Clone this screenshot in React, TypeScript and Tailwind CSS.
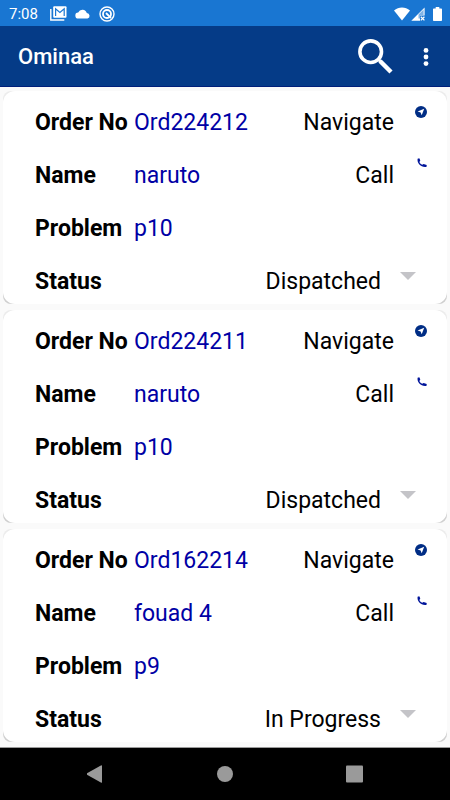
import { useState } from "react";

interface Order {
  orderNo: string;
  name: string;
  problem: string;
  status: string;
}

const ORDERS: Order[] = [
  { orderNo: "Ord224212", name: "naruto", problem: "p10", status: "Dispatched" },
  { orderNo: "Ord224211", name: "naruto", problem: "p10", status: "Dispatched" },
  { orderNo: "Ord162214", name: "fouad 4", problem: "p9", status: "In Progress" },
];

const STATUSES = ["Dispatched", "In Progress"];

function StatusBar() {
  return (
    <div className="flex h-[26px] shrink-0 items-center bg-[#1976d2] pl-[9px] pr-2 pt-px text-white">
      <span className="w-[41px] text-[15px] leading-6">7:08</span>
      <div className="flex items-center gap-2">
        {/* Mail */}
        <svg viewBox="0 0 17 15" className="h-[15px] w-[17px]" fill="none">
          <path d="M.8 3v11h13.5" stroke="currentColor" strokeWidth="1.4" />
          <rect x="3.2" y=".3" width="13.3" height="11.4" rx="1" fill="currentColor" />
          <path d="M5.6 10V2.8l4.3 3.6 4.3-3.6V10" stroke="#1976d2" strokeWidth="1.2" />
        </svg>
        {/* Cloud */}
        <svg viewBox="0 0 16 10" className="h-[10px] w-4" fill="currentColor">
          <path d="M3.5 9.5a3 3 0 0 1-.3-6A4.6 4.6 0 0 1 11.8 4 2.8 2.8 0 0 1 12.5 9.5z" />
        </svg>
        {/* Q badge */}
        <svg viewBox="0 0 16 16" className="h-4 w-4" fill="none" stroke="currentColor">
          <circle cx="8" cy="8" r="7" strokeWidth="1.4" />
          <circle cx="8" cy="8" r="4" strokeWidth="1.8" />
          <path d="M7 7l5 5" strokeWidth="1.8" />
        </svg>
      </div>
      <div className="ml-auto flex items-center">
        {/* Wifi */}
        <svg viewBox="0 0 16 14" className="h-[14px] w-4" fill="currentColor">
          <path d="M0 3.5C4.6-.6 11.4-.6 16 3.5L8 13.5z" />
        </svg>
        {/* Signal without data */}
        <svg viewBox="0 0 14 14" className="ml-px h-[14px] w-[14px]">
          <path d="M.3 13.7L13.6.4v8H9v5.3z" fill="currentColor" />
          <path d="M7.5 7.5l5.1-5v5.6H9v3.5H7.5z" fill="#1976d2" opacity=".55" />
          <path d="M9.8 9.8l3.6 3.6m0-3.6l-3.6 3.6" stroke="currentColor" strokeWidth="1.3" />
        </svg>
        {/* Battery */}
        <svg viewBox="0 0 9 14" className="ml-2 h-[14px] w-[9px]" fill="currentColor">
          <path d="M2.7 0h3.6v1.4H8.2a.8.8 0 0 1 .8.8v11a.8.8 0 0 1-.8.8H.8a.8.8 0 0 1-.8-.8v-11a.8.8 0 0 1 .8-.8h1.9z" />
        </svg>
      </div>
    </div>
  );
}

function AppBar() {
  return (
    <header className="flex h-[61px] shrink-0 items-center border-b border-[#001f7a] bg-[#053b87] pl-[18px] pr-5 pt-[2px] text-white">
      <h1 className="text-[22px] font-medium leading-7">Ominaa</h1>
      <button aria-label="Search" className="ml-auto">
        <svg viewBox="0 0 36 36" className="h-9 w-9" fill="none" stroke="currentColor">
          <circle cx="12.7" cy="12.7" r="10.8" strokeWidth="3.6" />
          <path d="M20.5 20.5l2 2" strokeWidth="3" />
          <path d="M22 22l11 11" strokeWidth="4.4" />
        </svg>
      </button>
      <button aria-label="More options" className="ml-7">
        <svg viewBox="0 0 8 20" className="h-5 w-2" fill="currentColor">
          <circle cx="4" cy="3.4" r="2.4" />
          <circle cx="4" cy="10" r="2.4" />
          <circle cx="4" cy="16.6" r="2.4" />
        </svg>
      </button>
    </header>
  );
}

function OrderCard({ order }: { order: Order }) {
  const [status, setStatus] = useState(order.status);
  const selectId = `status-${order.orderNo}`;

  return (
    // the darker backing shows only at the rounded corners
    <li className="rounded-lg bg-gradient-to-b from-[#ececec] to-[#cfcfcf]">
      <div className="flex rounded-xl bg-white pl-8 pr-5">
        <div className="flex flex-1 flex-col gap-6 pb-2 pt-[17px] text-[23px] leading-[29px] text-black">
          <div className="flex pr-[6px]">
            <span className="w-[99px] shrink-0 whitespace-nowrap font-bold">Order No</span>
            <span className="text-[#0000a5]">{order.orderNo}</span>
            <button className="ml-auto">Navigate</button>
          </div>
          <div className="flex pr-[6px]">
            <span className="w-[99px] shrink-0 font-bold">Name</span>
            <span className="text-[#0000a5]">{order.name}</span>
            <button className="ml-auto">Call</button>
          </div>
          <div className="flex">
            <span className="w-[99px] shrink-0 font-bold">Problem</span>
            <span className="text-[#0000a5]">{order.problem}</span>
          </div>
          <div className="flex pr-[19px]">
            <label htmlFor={selectId} className="font-bold">Status</label>
            <select
              id={selectId}
              value={status}
              onChange={e => setStatus(e.target.value)}
              className="ml-auto h-[29px] appearance-none bg-transparent text-right leading-[29px]"
            >
              {STATUSES.map(s => (
                <option key={s}>{s}</option>
              ))}
            </select>
          </div>
        </div>

        {/* Icons for navigate, call and the status menu */}
        <div className="flex w-[27px] shrink-0 flex-col pb-6 pt-[15px] text-[#002d85]">
          <svg viewBox="0 0 12 12" className="h-3 w-3 self-end">
            <circle cx="6" cy="6" r="6" fill="currentColor" />
            <path d="M9.2 2.8L6.7 9.3 5.6 6.5 2.6 5.6z" fill="#fff" />
          </svg>
          <svg viewBox="0 0 12 12" className="mt-[39px] h-3 w-3 self-end text-[#00149a]" fill="currentColor">
            <path d="M2.6 1.7L4.3 1.2 5.3 3.6 4.4 4.9C5 6.2 5.9 7.1 7.2 7.7L8.6 6.9 11.7 7.9 11.6 9.8C6.6 10.9 1.8 6.6 2.6 1.7z" />
          </svg>
          <svg viewBox="0 0 16 8" className="mt-auto h-2 w-4 text-[#c4c4c8]" fill="currentColor">
            <path d="M0 0h16L8 8z" />
          </svg>
        </div>
      </div>
    </li>
  );
}

function NavBar() {
  return (
    <nav className="flex h-[53px] shrink-0 items-center justify-center gap-[111px] border-t border-[#9a9a9a] bg-black text-[#9a9a9a]">
      <button aria-label="Back">
        <svg viewBox="0 0 18 18" className="h-[18px] w-[18px]" fill="currentColor">
          <path d="M14.3.3a.5.5 0 0 1 .7.4v16.6a.5.5 0 0 1-.7.4L-.7 9.4a.5.5 0 0 1 0-.8z" />
        </svg>
      </button>
      <button aria-label="Home">
        <svg viewBox="0 0 18 18" className="h-[18px] w-[18px]" fill="currentColor">
          <circle cx="9" cy="9" r="8" />
        </svg>
      </button>
      <button aria-label="Recent apps">
        <svg viewBox="0 0 18 18" className="h-[18px] w-[18px]" fill="currentColor">
          <rect x="1" y=".5" width="17" height="17" rx="1" />
        </svg>
      </button>
    </nav>
  );
}

export default function App() {
  return (
    <div className="flex min-h-screen flex-col bg-[#fafafa] font-[Roboto,sans-serif]">
      <StatusBar />
      <AppBar />
      <main className="flex-1 px-[3px] pb-[5px] pt-1">
        <ul className="flex flex-col gap-[6px]">
          {ORDERS.map(order => (
            <OrderCard key={order.orderNo} order={order} />
          ))}
        </ul>
      </main>
      <NavBar />
    </div>
  );
}
